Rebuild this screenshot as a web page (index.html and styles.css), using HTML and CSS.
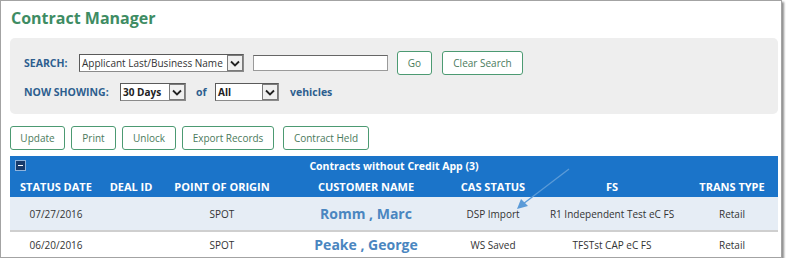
FILE: index.html
```html
<!DOCTYPE html>
<html>
<head>
<meta charset="utf-8">
<link rel="stylesheet" href="styles.css">
</head>
<body>
<div class="frame">
  <h1 class="title">Contract Manager</h1>
  <div class="panel">
    <div class="prow">
      <span class="lbl">SEARCH:</span>
      <div class="sel sel-search"><span class="sel-text">Applicant Last/Business Name</span><span class="sel-btn"><svg width="10" height="7" viewBox="0 0 10 7"><path d="M1 1.5 L5 5.5 L9 1.5" fill="none" stroke="#222" stroke-width="1.8"/></svg></span></div>
      <div class="txt"></div>
      <button class="btn btn-go">Go</button>
      <button class="btn btn-clear">Clear Search</button>
    </div>
    <div class="prow prow2">
      <span class="lbl">NOW SHOWING:</span>
      <div class="sel sel-days"><span class="sel-text b">30 Days</span><span class="sel-btn"><svg width="10" height="7" viewBox="0 0 10 7"><path d="M1 1.5 L5 5.5 L9 1.5" fill="none" stroke="#222" stroke-width="1.8"/></svg></span></div>
      <span class="lbl of">of</span>
      <div class="sel sel-all"><span class="sel-text b">All</span><span class="sel-btn"><svg width="10" height="7" viewBox="0 0 10 7"><path d="M1 1.5 L5 5.5 L9 1.5" fill="none" stroke="#222" stroke-width="1.8"/></svg></span></div>
      <span class="lbl veh">vehicles</span>
    </div>
  </div>
  <div class="actions">
    <button class="btn a1">Update</button>
    <button class="btn a2">Print</button>
    <button class="btn a3">Unlock</button>
    <button class="btn a4">Export Records</button>
    <button class="btn a5">Contract Held</button>
  </div>
  <div class="table">
    <div class="thead">
      <div class="group"><span class="minus"></span><span class="group-title">Contracts without Credit App (3)</span></div>
      <div class="trow hrow">
        <div class="c c1 left">STATUS DATE</div>
        <div class="c c2">DEAL ID</div>
        <div class="c c3">POINT OF ORIGIN</div>
        <div class="c c4">CUSTOMER NAME</div>
        <div class="c c5">CAS STATUS</div>
        <div class="c c6">FS</div>
        <div class="c c7">TRANS TYPE</div>
      </div>
    </div>
    <div class="trow drow alt">
      <div class="c c1">07/27/2016</div>
      <div class="c c2"></div>
      <div class="c c3">SPOT</div>
      <div class="c c4 name">Romm , Marc</div>
      <div class="c c5">DSP Import</div>
      <div class="c c6">R1 Independent Test eC FS</div>
      <div class="c c7">Retail</div>
    </div>
    <div class="trow drow">
      <div class="c c1">06/20/2016</div>
      <div class="c c2"></div>
      <div class="c c3">SPOT</div>
      <div class="c c4 name">Peake , George</div>
      <div class="c c5">WS Saved</div>
      <div class="c c6">TFSTst CAP eC FS</div>
      <div class="c c7">Retail</div>
    </div>
  </div>
  <svg class="arrow" width="80" height="60" viewBox="0 0 80 60">
    <line x1="68" y1="8" x2="22" y2="43" stroke="#5b9bd8" stroke-width="1.3"/>
    <path d="M16 48 L20 38 L27 45 Z" fill="#5b9bd8"/>
  </svg>
</div>
</body>
</html>
```

FILE: styles.css
```css
* { box-sizing: border-box; }
html, body { margin: 0; padding: 0; background: #fff; }
body { font-family: "Open Sans", "Liberation Sans", sans-serif; }

.frame {
  position: relative;
  width: 782px;
  height: 258px;
  border: 1px solid #a3a3a3;
  box-shadow: 2px 2px 2px #8f8f8f;
  background: #fff;
  padding: 0 3px 0 9px;
  overflow: hidden;
}

.title {
  margin: 0;
  padding: 6px 0 0 1px;
  height: 37px;
  font-size: 16px;
  font-weight: 700;
  color: #3e8c63;
  line-height: 22px;
}

.panel {
  width: 768px;
  height: 76px;
  background: #eeeeee;
  border-radius: 5px;
  padding: 12px 0 0 14px;
}

.prow { display: flex; align-items: center; height: 26px; }
.prow2 { margin-top: 3px; }

.lbl { font-size: 10.5px; font-weight: 700; color: #2d5e8e; }
.prow .lbl:first-child { width: 55px; }
.prow2 .lbl:first-child { width: 96px; }
.of { margin-left: 10px; width: 19px; }
.veh { margin-left: 11px; }

.sel {
  display: flex;
  align-items: center;
  height: 18px;
  border: 1px solid #8a8a8a;
  border-top-color: #5a5a5a;
  border-left-color: #5a5a5a;
  background: #fff;
  padding-left: 2px;
}
.sel-text { flex: 1; font-size: 10px; color: #333; white-space: nowrap; }
.sel-text.b { font-weight: 700; color: #222; }
.sel-btn {
  width: 16px; height: 16px;
  border: 1px solid #7a7a7a;
  background: #f0f0f0;
  display: flex; align-items: center; justify-content: center;
}
.sel-search { width: 165px; }
.sel-days { width: 66px; }
.sel-all { width: 64px; }

.txt {
  width: 135px; height: 16px;
  margin-left: 9px;
  background: #fff;
  border: 1px solid #9a9a9a;
  border-top-color: #666;
}

.btn {
  font-family: "Open Sans", "Liberation Sans", sans-serif;
  font-size: 10px;
  color: #4b7a5c;
  background: #fff;
  border: 1px solid #4c9a72;
  border-radius: 3px;
  height: 24px;
  padding: 0;
  line-height: 20px;
}
.btn-go { width: 35px; margin-left: 9px; }
.btn-clear { width: 81px; margin-left: 10px; }

.actions { display: flex; height: 42px; padding-top: 12px; }
.actions .btn { height: 24px; }
.a1 { width: 55px; }
.a2 { width: 45px; margin-left: 6px; }
.a3 { width: 54px; margin-left: 6px; }
.a4 { width: 92px; margin-left: 6px; }
.a5 { width: 86px; margin-left: 9px; }

.table { width: 768px; }
.thead { background: #1b74c9; color: #fff; height: 41px; }
.group { position: relative; height: 20px; display: flex; align-items: center; justify-content: center; }
.minus {
  position: absolute; left: 5px; top: 4px;
  width: 11px; height: 11px;
  background: #173a6b;
  border: 1px solid #8fb3dc;
}
.minus::after {
  content: ""; position: absolute; left: 2px; top: 4px;
  width: 5px; height: 1px; background: #fff;
}
.group-title { font-size: 10.5px; font-weight: 700; }

.trow { display: flex; align-items: center; }
.hrow { height: 21px; font-size: 11px; font-weight: 700; }
.c { text-align: center; white-space: nowrap; }
.c1 { width: 92px; }
.c2 { width: 58px; }
.c3 { width: 124px; }
.c4 { width: 164px; }
.c5 { width: 90px; }
.c6 { width: 148px; }
.c7 { width: 92px; }
.hrow .c1 { text-align: left; padding-left: 10px; }

.drow { font-size: 10px; color: #333; }
.drow.alt { height: 35px; background: #e6edf5; border-bottom: 2px solid #cfcfcf; }
.drow:not(.alt) { height: 25px; }
.name { font-size: 14px; font-weight: 700; color: #4a86c0; }

.arrow { position: absolute; left: 500px; top: 160px; }
```
